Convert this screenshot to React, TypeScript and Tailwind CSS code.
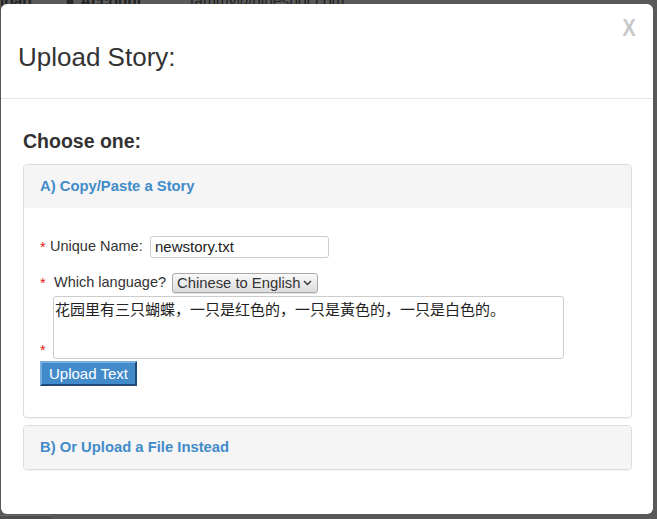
import React from 'react';

const UserGlyph = () => (
  <svg width="14" height="14" viewBox="0 0 14 14" className="inline-block">
    <circle cx="7" cy="4" r="3.4" fill="#262626" />
    <path d="M0.5 14 C0.8 9.5 3 8 7 8 C11 8 13.2 9.5 13.5 14 Z" fill="#262626" />
  </svg>
);

const Req = ({ w }: { w: string }) => (
  <span className={`${w} shrink-0 text-[14.5px] leading-[17px] text-[#e02020]`}>*</span>
);

const App = () => {
  return (
    <div className="relative min-h-[519px] w-full overflow-hidden bg-[#595959] pt-[4px] pl-[1px] font-['Liberation_Sans',Arial,sans-serif]">
      {/* page behind the overlay */}
      <div className="absolute left-0 top-[-10px] flex items-center text-[15.5px] leading-[15.5px] text-[#222]">
        <span className="w-[63px] font-bold">load</span>
        <span className="w-[17px] pt-[6px]">
          <UserGlyph />
        </span>
        <span className="w-[110px] font-bold">Account</span>
        <span>tammy@ninespot.com</span>
      </div>
      <div className="absolute bottom-0 left-0 h-[4px] w-[52px] rounded-tr-[2px] border-t border-[#6a6a6a] bg-[#4e4e4e]" />

      {/* modal */}
      <div className="relative h-[510px] w-[652px] rounded-[6px] bg-white">
        <div className="relative h-[95px] border-b border-[#e5e5e5] pt-[38px] pl-[17px]">
          <h3 className="text-[26px] leading-[30px] text-[#333]">Upload Story:</h3>
          <button className="absolute right-[16px] top-[12px] scale-x-[0.82] text-[24px] font-bold leading-[24px] text-[#c8c8c8]">
            X
          </button>
        </div>

        <div className="pt-[30px] pl-[22px] pr-[21px]">
          <h4 className="mb-[11px] text-[19.5px] font-bold leading-[24px] text-[#333]">Choose one:</h4>

          {/* A */}
          <div className="rounded-[4px] border border-[#dddddd] shadow-[0_1px_1px_rgba(0,0,0,0.05)]">
            <div className="flex h-[43px] items-center rounded-t-[3px] bg-[#f5f5f5] px-[16px]">
              <span className="text-[14.8px] font-bold text-[#428bca]">A) Copy/Paste a Story</span>
            </div>
            <div className="pt-[28px] pb-[31px] pl-[16px]">
              <div className="flex h-[22px] items-center">
                <Req w="w-[10px]" />
                <span className="w-[100px] text-[14.5px] text-[#333]">Unique Name:</span>
                <input
                  defaultValue="newstory.txt"
                  className="h-[22px] w-[179px] rounded-[3px] border border-[#cccccc] px-[4px] text-[15px] text-[#222] outline-none"
                />
              </div>

              <div className="mt-[15px] flex h-[20px] items-center">
                <Req w="w-[14px]" />
                <span className="w-[118px] text-[14.5px] text-[#333]">Which language?</span>
                <button className="flex h-[20px] w-[146px] items-center justify-between rounded-[3px] border border-[#a9a9a9] bg-gradient-to-b from-[#f9f9f9] to-[#dcdcdc] pl-[4px] pr-[5px] text-[14.8px] leading-[18px] text-[#333] shadow-[0_1px_1px_rgba(0,0,0,0.12)]">
                  <span>Chinese to English</span>
                  <svg width="9" height="6" viewBox="0 0 9 6">
                    <path d="M1 1 L4.5 4.5 L8 1" stroke="#333" strokeWidth="1.4" fill="none" />
                  </svg>
                </button>
              </div>

              <div className="mt-[3px] flex items-end">
                <Req w="w-[13px]" />
                <textarea
                  defaultValue="花园里有三只蝴蝶，一只是红色的，一只是黃色的，一只是白色的。"
                  className="h-[63px] w-[511px] resize-none rounded-[3px] border border-[#cccccc] px-[1px] py-[2px] font-['Noto_Sans_CJK_SC','Liberation_Sans',sans-serif] text-[15px] leading-[20px] text-[#222] outline-none"
                />
              </div>

              <button className="mt-[2px] h-[25px] border-2 border-t-[#7aaedc] border-l-[#7aaedc] border-r-[#1d4b75] border-b-[#1d4b75] bg-[#428bca] px-[7px] text-[15px] leading-[19px] text-white">
                Upload Text
              </button>
            </div>
          </div>

          {/* B */}
          <div className="mt-[7px] rounded-[4px] border border-[#dddddd] shadow-[0_1px_1px_rgba(0,0,0,0.05)]">
            <div className="flex h-[43px] items-center rounded-[3px] bg-[#f5f5f5] px-[16px]">
              <span className="text-[14.8px] font-bold text-[#428bca]">B) Or Upload a File Instead</span>
            </div>
          </div>
        </div>
      </div>
    </div>
  );
};

export default App;
